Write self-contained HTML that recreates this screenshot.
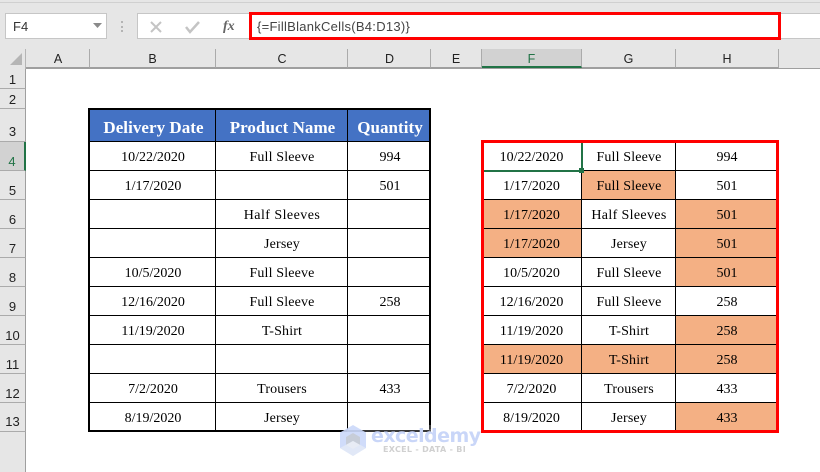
<!DOCTYPE html>
<html><head><meta charset="utf-8">
<style>
html,body{margin:0;padding:0;background:#fff}
#p{position:relative;width:820px;height:472px;overflow:hidden;background:#fff;font-family:"Liberation Sans",sans-serif}
#p div{position:absolute;box-sizing:border-box}
.h{top:49px;height:19px;line-height:20px;text-align:center;font-size:12.500px;color:#222;border-right:1px solid #ababab;border-bottom:1px solid #9f9f9f}
.r{left:0;width:26px;text-align:center;font-size:13px;color:#222;border-bottom:1px solid #ababab;border-right:1px solid #9f9f9f;background:#e6e6e6}
.c{font-family:"Liberation Serif",serif;font-size:14px;color:#000;text-align:center;height:28px;line-height:29px;white-space:nowrap;transform:translate(1px,1px)}
.t{letter-spacing:.15px}
.b{height:31px;line-height:33px;font-size:17px;font-weight:bold;color:#fff;letter-spacing:.05px}
.o{background:#f4b084}
.k{background:#000}
</style></head><body><div id="p">
<div style="left:0;top:0;width:820px;height:69px;background:#e6e6e6"></div>
<div style="left:0;top:2px;width:820px;height:1px;background:#d0d0d0"></div>
<div style="left:5px;top:13px;width:102px;height:26px;background:#fff;border:1px solid #c6c6c6;font-size:13px;line-height:25px;padding-left:7px;color:#333">F4</div>
<svg style="position:absolute;left:92px;top:22px" width="11" height="7"><path d="M1 1H10L5.500 6Z" fill="#8a8a8a"/></svg>
<div style="left:121px;top:21px;width:2px;height:2px;background:#b4b4b4"></div>
<div style="left:121px;top:26px;width:2px;height:2px;background:#b4b4b4"></div>
<div style="left:121px;top:30px;width:2px;height:2px;background:#b4b4b4"></div>
<div style="left:137px;top:13px;width:113px;height:26px;background:#fff;border:1px solid #c6c6c6"></div>
<svg style="position:absolute;left:148px;top:19px" width="70" height="16"><path d="M3 3L13 13M13 3L3 13" stroke="#c4c4c4" stroke-width="2" fill="none"/><path d="M38 8L42 13L51 3" stroke="#c4c4c4" stroke-width="2.500" fill="none"/></svg>
<div style="left:223px;top:17px;width:20px;height:20px;font-family:'Liberation Serif',serif;font-style:italic;font-weight:bold;font-size:14px;line-height:20px;color:#666">fx</div>
<div style="left:250px;top:13px;width:570px;height:26px;background:#fff;border-top:1px solid #c6c6c6;border-bottom:1px solid #c6c6c6"></div>
<div style="left:249px;top:12px;width:532px;height:28px;border:3px solid #f00;font-size:13px;line-height:24px;padding-left:5px;color:#444;letter-spacing:.27px;white-space:nowrap">{=FillBlankCells(B4:D13)}</div>

<svg style="position:absolute;left:9px;top:52px" width="15" height="14"><path d="M13 1V13H1Z" fill="#b5b5b5"/></svg>
<div style="left:25px;top:49px;width:1px;height:20px;background:#b5b5b5"></div>
<div style="left:26px;top:68px;width:794px;height:1px;background:#9f9f9f"></div>
<div class="h" style="left:26px;width:64px;padding-left:1px">A</div>
<div class="h" style="left:90px;width:126px">B</div>
<div class="h" style="left:216px;width:132px;padding-left:1px">C</div>
<div class="h" style="left:348px;width:83px;padding-left:1px">D</div>
<div class="h" style="left:431px;width:51px">E</div>
<div class="h" style="left:482px;width:100px;background:#d2d2d2;border-bottom:2px solid #217346;color:#217346">F</div>
<div class="h" style="left:582px;width:94px">G</div>
<div class="h" style="left:676px;width:103px">H</div>

<div class="r" style="top:69px;height:20px;line-height:22px">1</div>
<div class="r" style="top:89px;height:20px;line-height:22px">2</div>
<div class="r" style="top:109px;height:33px;line-height:46px">3</div>
<div class="r" style="top:142px;height:29px;line-height:40px;background:#d2d2d2;color:#217346;border-right:2px solid #217346">4</div>
<div class="r" style="top:171px;height:29px;line-height:40px">5</div>
<div class="r" style="top:200px;height:29px;line-height:40px">6</div>
<div class="r" style="top:229px;height:29px;line-height:40px">7</div>
<div class="r" style="top:258px;height:29px;line-height:40px">8</div>
<div class="r" style="top:287px;height:29px;line-height:40px">9</div>
<div class="r" style="top:316px;height:29px;line-height:40px">10</div>
<div class="r" style="top:345px;height:29px;line-height:40px">11</div>
<div class="r" style="top:374px;height:29px;line-height:40px">12</div>
<div class="r" style="top:403px;height:29px;line-height:38px">13</div>
<div style="left:0;top:432px;width:26px;height:40px;background:#e6e6e6;border-right:1px solid #9f9f9f"></div>

<!-- Left table -->
<div style="left:90px;top:110px;width:339px;height:31px;background:#4472c4"></div>
<div class="c b" style="left:90px;top:110px;width:125px">Delivery Date</div>
<div class="c b" style="left:216px;top:110px;width:131px">Product Name</div>
<div class="c b" style="left:348px;top:110px;width:82px">Quantity</div>

<div class="k" style="left:88px;top:108px;width:343px;height:2px"></div>
<div class="k" style="left:88px;top:430px;width:343px;height:2px"></div>
<div class="k" style="left:88px;top:108px;width:2px;height:324px"></div>
<div class="k" style="left:429px;top:108px;width:2px;height:324px"></div>
<div class="k" style="left:215px;top:110px;width:1px;height:320px"></div>
<div class="k" style="left:347px;top:110px;width:1px;height:320px"></div>
<div class="k" style="left:90px;top:141px;width:339px;height:1px"></div>
<div class="k" style="left:90px;top:170px;width:339px;height:1px"></div>
<div class="k" style="left:90px;top:199px;width:339px;height:1px"></div>
<div class="k" style="left:90px;top:228px;width:339px;height:1px"></div>
<div class="k" style="left:90px;top:257px;width:339px;height:1px"></div>
<div class="k" style="left:90px;top:286px;width:339px;height:1px"></div>
<div class="k" style="left:90px;top:315px;width:339px;height:1px"></div>
<div class="k" style="left:90px;top:344px;width:339px;height:1px"></div>
<div class="k" style="left:90px;top:373px;width:339px;height:1px"></div>
<div class="k" style="left:90px;top:402px;width:339px;height:1px"></div>

<div class="c" style="left:90px;top:142px;width:124px">10/22/2020</div>
<div class="c t" style="left:216px;top:142px;width:130px">Full Sleeve</div>
<div class="c" style="left:348px;top:142px;width:82px">994</div>
<div class="c" style="left:90px;top:171px;width:124px">1/17/2020</div>
<div class="c" style="left:348px;top:171px;width:82px">501</div>
<div class="c t" style="left:216px;top:200px;width:130px;letter-spacing:.45px">Half Sleeves</div>
<div class="c t" style="left:216px;top:229px;width:130px">Jersey</div>
<div class="c" style="left:90px;top:258px;width:124px">10/5/2020</div>
<div class="c t" style="left:216px;top:258px;width:130px">Full Sleeve</div>
<div class="c" style="left:90px;top:287px;width:124px">12/16/2020</div>
<div class="c t" style="left:216px;top:287px;width:130px">Full Sleeve</div>
<div class="c" style="left:348px;top:287px;width:82px">258</div>
<div class="c" style="left:90px;top:316px;width:124px">11/19/2020</div>
<div class="c t" style="left:216px;top:316px;width:130px">T-Shirt</div>
<div class="c" style="left:90px;top:374px;width:124px">7/2/2020</div>
<div class="c t" style="left:216px;top:374px;width:130px">Trousers</div>
<div class="c" style="left:348px;top:374px;width:82px">433</div>
<div class="c" style="left:90px;top:403px;width:124px">8/19/2020</div>
<div class="c t" style="left:216px;top:403px;width:130px">Jersey</div>

<!-- Right table fills -->
<div class="o" style="left:582px;top:171px;width:94px;height:29px"></div>
<div class="o" style="left:482px;top:200px;width:100px;height:58px"></div>
<div class="o" style="left:676px;top:200px;width:103px;height:87px"></div>
<div class="o" style="left:676px;top:316px;width:103px;height:58px"></div>
<div class="o" style="left:482px;top:345px;width:194px;height:29px"></div>
<div class="o" style="left:676px;top:403px;width:103px;height:29px"></div>

<div class="k" style="left:581px;top:142px;width:1px;height:288px"></div>
<div class="k" style="left:675px;top:142px;width:1px;height:288px"></div>
<div class="k" style="left:484px;top:170px;width:292px;height:1px"></div>
<div class="k" style="left:484px;top:199px;width:292px;height:1px"></div>
<div class="k" style="left:484px;top:228px;width:292px;height:1px"></div>
<div class="k" style="left:484px;top:257px;width:292px;height:1px"></div>
<div class="k" style="left:484px;top:286px;width:292px;height:1px"></div>
<div class="k" style="left:484px;top:315px;width:292px;height:1px"></div>
<div class="k" style="left:484px;top:344px;width:292px;height:1px"></div>
<div class="k" style="left:484px;top:373px;width:292px;height:1px"></div>
<div class="k" style="left:484px;top:402px;width:292px;height:1px"></div>

<div class="c" style="left:482px;top:142px;width:97px">10/22/2020</div>
<div class="c t" style="left:582px;top:142px;width:92px">Full Sleeve</div>
<div class="c" style="left:676px;top:142px;width:100px">994</div>
<div class="c" style="left:482px;top:171px;width:97px">1/17/2020</div>
<div class="c t" style="left:582px;top:171px;width:92px">Full Sleeve</div>
<div class="c" style="left:676px;top:171px;width:100px">501</div>
<div class="c" style="left:482px;top:200px;width:97px">1/17/2020</div>
<div class="c t" style="left:582px;top:200px;width:92px;letter-spacing:.35px">Half Sleeves</div>
<div class="c" style="left:676px;top:200px;width:100px">501</div>
<div class="c" style="left:482px;top:229px;width:97px">1/17/2020</div>
<div class="c t" style="left:582px;top:229px;width:92px">Jersey</div>
<div class="c" style="left:676px;top:229px;width:100px">501</div>
<div class="c" style="left:482px;top:258px;width:97px">10/5/2020</div>
<div class="c t" style="left:582px;top:258px;width:92px">Full Sleeve</div>
<div class="c" style="left:676px;top:258px;width:100px">501</div>
<div class="c" style="left:482px;top:287px;width:97px">12/16/2020</div>
<div class="c t" style="left:582px;top:287px;width:92px">Full Sleeve</div>
<div class="c" style="left:676px;top:287px;width:100px">258</div>
<div class="c" style="left:482px;top:316px;width:97px">11/19/2020</div>
<div class="c t" style="left:582px;top:316px;width:92px">T-Shirt</div>
<div class="c" style="left:676px;top:316px;width:100px">258</div>
<div class="c" style="left:482px;top:345px;width:97px">11/19/2020</div>
<div class="c t" style="left:582px;top:345px;width:92px">T-Shirt</div>
<div class="c" style="left:676px;top:345px;width:100px">258</div>
<div class="c" style="left:482px;top:374px;width:97px">7/2/2020</div>
<div class="c t" style="left:582px;top:374px;width:92px">Trousers</div>
<div class="c" style="left:676px;top:374px;width:100px">433</div>
<div class="c" style="left:482px;top:403px;width:97px">8/19/2020</div>
<div class="c t" style="left:582px;top:403px;width:92px">Jersey</div>
<div class="c" style="left:676px;top:403px;width:100px">433</div>

<!-- Active cell -->
<div style="left:581px;top:142px;width:2px;height:29px;background:#217346"></div>
<div style="left:482px;top:170px;width:100px;height:2px;background:#217346"></div>
<div style="left:579px;top:168px;width:5px;height:5px;background:#217346"></div>

<!-- Red box -->
<div style="left:481px;top:140px;width:298px;height:293px;border:3px solid #f00"></div>

<!-- Watermark -->
<div style="left:347px;top:429px;width:84px;height:3px;background:rgba(255,255,255,.22)"></div>
<div style="left:429px;top:425px;width:2px;height:7px;background:rgba(255,255,255,.22)"></div>
<svg style="position:absolute;left:339px;top:424px;opacity:.9" width="28" height="33" viewBox="0 0 28 33"><path d="M14 1L27 8.500V24L14 32L1 24V8.500Z" fill="#ccd9fa"/><path d="M14 9L21 13V21L14 25L7 21V13Z" fill="#c2c8d4"/><path d="M14 17L21 21L14 25L7 21Z" fill="#e6ebf5"/><path d="M1 24L14 17L27 24L14 32Z" fill="#e6ebf5" opacity=".7"/></svg>
<div style="left:371px;top:425px;font-family:'DejaVu Sans',sans-serif;font-weight:bold;font-size:19px;line-height:22px;color:#c9d6f8;white-space:nowrap;letter-spacing:-.55px">exceldemy</div>
<div style="left:383px;top:445px;font-family:'DejaVu Sans',sans-serif;font-weight:bold;font-size:8px;line-height:10px;color:#d0d0d0;white-space:nowrap;letter-spacing:.3px">EXCEL - DATA - BI</div>
</div></body></html>
